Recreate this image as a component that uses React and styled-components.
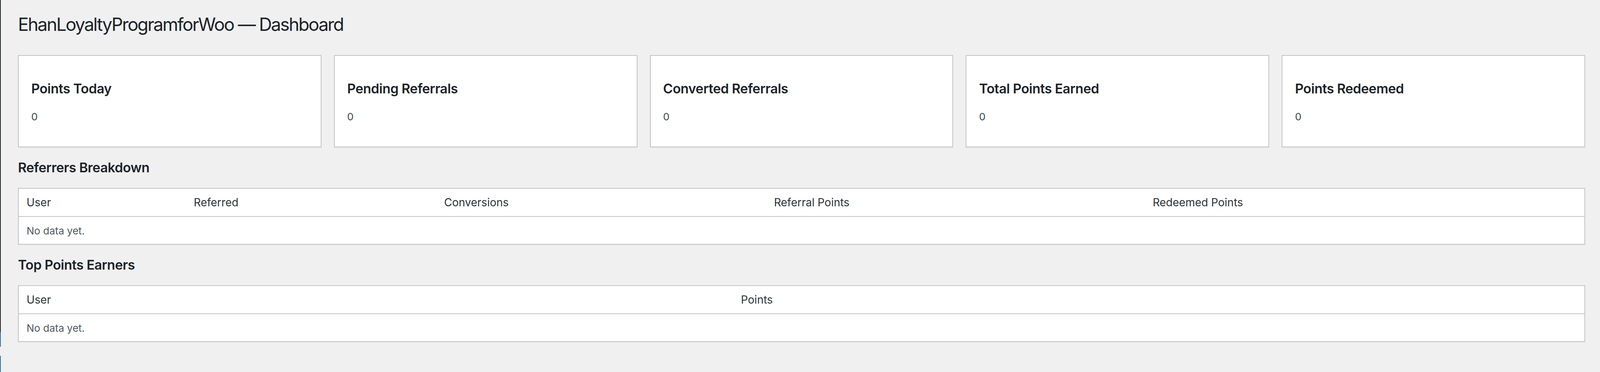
import React from 'react'
import styled, { createGlobalStyle } from 'styled-components'

const stats = [
    { label: 'Points Today', value: 0 },
    { label: 'Pending Referrals', value: 0 },
    { label: 'Converted Referrals', value: 0 },
    { label: 'Total Points Earned', value: 0 },
    { label: 'Points Redeemed', value: 0 },
]

// column widths in % of the table, read off the screenshot
const referrerCols = [
    { name: 'User', width: 10.68 },
    { name: 'Referred', width: 15.99 },
    { name: 'Conversions', width: 21.07 },
    { name: 'Referral Points', width: 24.19 },
    { name: 'Redeemed Points', width: 28.07 },
]

const earnerCols = [
    { name: 'User', width: 45.63 },
    { name: 'Points', width: 54.37 },
]

const DataTable = ({ cols }) => (
    <Table>
        <thead>
            <tr>
                {cols.map((c) => (
                    <Th key={c.name} $width={c.width}>{c.name}</Th>
                ))}
            </tr>
        </thead>
        <tbody>
            <tr>
                <Td colSpan={cols.length}>No data yet.</Td>
            </tr>
        </tbody>
    </Table>
)

const App = () => {
    return (
        <>
            <GlobalStyle />
            <Page>
                <AdminEdge>
                    <EdgePart $color="#1d2327" $size={850} />
                    <EdgePart $color="#2271b1" $size={38} $round="bottom" />
                    <EdgePart $color="transparent" $size={22} />
                    <EdgePart $color="#2271b1" $grow $round="top" />
                </AdminEdge>

                <Wrap>
                    <PageTitle>EhanLoyaltyProgramforWoo — Dashboard</PageTitle>

                    <CardGrid>
                        {stats.map((s) => (
                            <Card key={s.label}>
                                <CardTitle>{s.label}</CardTitle>
                                <CardValue>{s.value}</CardValue>
                            </Card>
                        ))}
                    </CardGrid>

                    <SectionTitle>Referrers Breakdown</SectionTitle>
                    <DataTable cols={referrerCols} />

                    <SectionTitle>Top Points Earners</SectionTitle>
                    <DataTable cols={earnerCols} />
                </Wrap>
            </Page>
        </>
    )
}

export default App



//Componentes
const GlobalStyle = createGlobalStyle`
    html, body{
        margin:0;
        padding:0;
        overflow:hidden;
        background:#f0f0f1;
    }
    body{
        font-family: Inter, "Noto Sans", "Liberation Sans", sans-serif;
        color:#3c434a;
        -webkit-font-smoothing: antialiased;
    }
    *{
        box-sizing:border-box;
    }
`;

const Page = styled.div`
    display:flex;
    width:100%;
    height:100vh;
    min-height:952px;
`;

const AdminEdge = styled.div`
    width:2px;
    display:flex;
    flex-direction:column;
    flex-shrink:0;
`;

const EdgePart = styled.div`
    background:${(p) => p.$color};
    height:${(p) => (p.$grow ? 'auto' : `${p.$size}px`)};
    flex:${(p) => (p.$grow ? 1 : 'none')};
    border-bottom-right-radius:${(p) => (p.$round === 'bottom' ? '2px' : 0)};
    border-top-right-radius:${(p) => (p.$round === 'top' ? '2px' : 0)};
`;

const Wrap = styled.div`
    flex:1;
    min-width:0;
    padding:32px 38px 0 44px;
    display:flex;
    flex-direction:column;
`;

const PageTitle = styled.h1`
    margin:0;
    font-size:46px;
    font-weight:400;
    line-height:60px;
    letter-spacing:-0.052em;
    color:#1d2327;
`;

const CardGrid = styled.div`
    display:grid;
    grid-template-columns:repeat(5, minmax(0, 1fr));
    gap:32px;
    margin-top:49px;
`;

const Card = styled.div`
    background:#fff;
    border:2px solid #c3c4c7;
    box-shadow:0 2px 2px rgba(0,0,0,.04);
    padding:32px;
`;

const CardTitle = styled.h2`
    margin:34px 0 0;
    font-size:34px;
    font-weight:600;
    line-height:36px;
    letter-spacing:-0.015em;
    color:#1d2327;
`;

const CardValue = styled.p`
    margin:34px 0 25px;
    font-size:26px;
    line-height:39px;
    color:#3c434a;
`;

const SectionTitle = styled.h2`
    margin:34px 0;
    font-size:34px;
    font-weight:600;
    line-height:36px;
    letter-spacing:-0.015em;
    color:#1d2327;
`;

const Table = styled.table`
    width:100%;
    table-layout:fixed;
    border-collapse:separate;
    border-spacing:0;
    background:#fff;
    border:2px solid #c3c4c7;
    box-shadow:0 2px 2px rgba(0,0,0,.04);
`;

const Th = styled.th`
    width:${(p) => p.$width}%;
    text-align:left;
    font-weight:400;
    font-size:28px;
    line-height:39px;
    color:#2c3338;
    padding:16px 20px 15px;
    border-bottom:2px solid #c3c4c7;
`;

const Td = styled.td`
    font-size:26px;
    line-height:39px;
    color:#50575e;
    padding:16px 20px 14px;
`;
